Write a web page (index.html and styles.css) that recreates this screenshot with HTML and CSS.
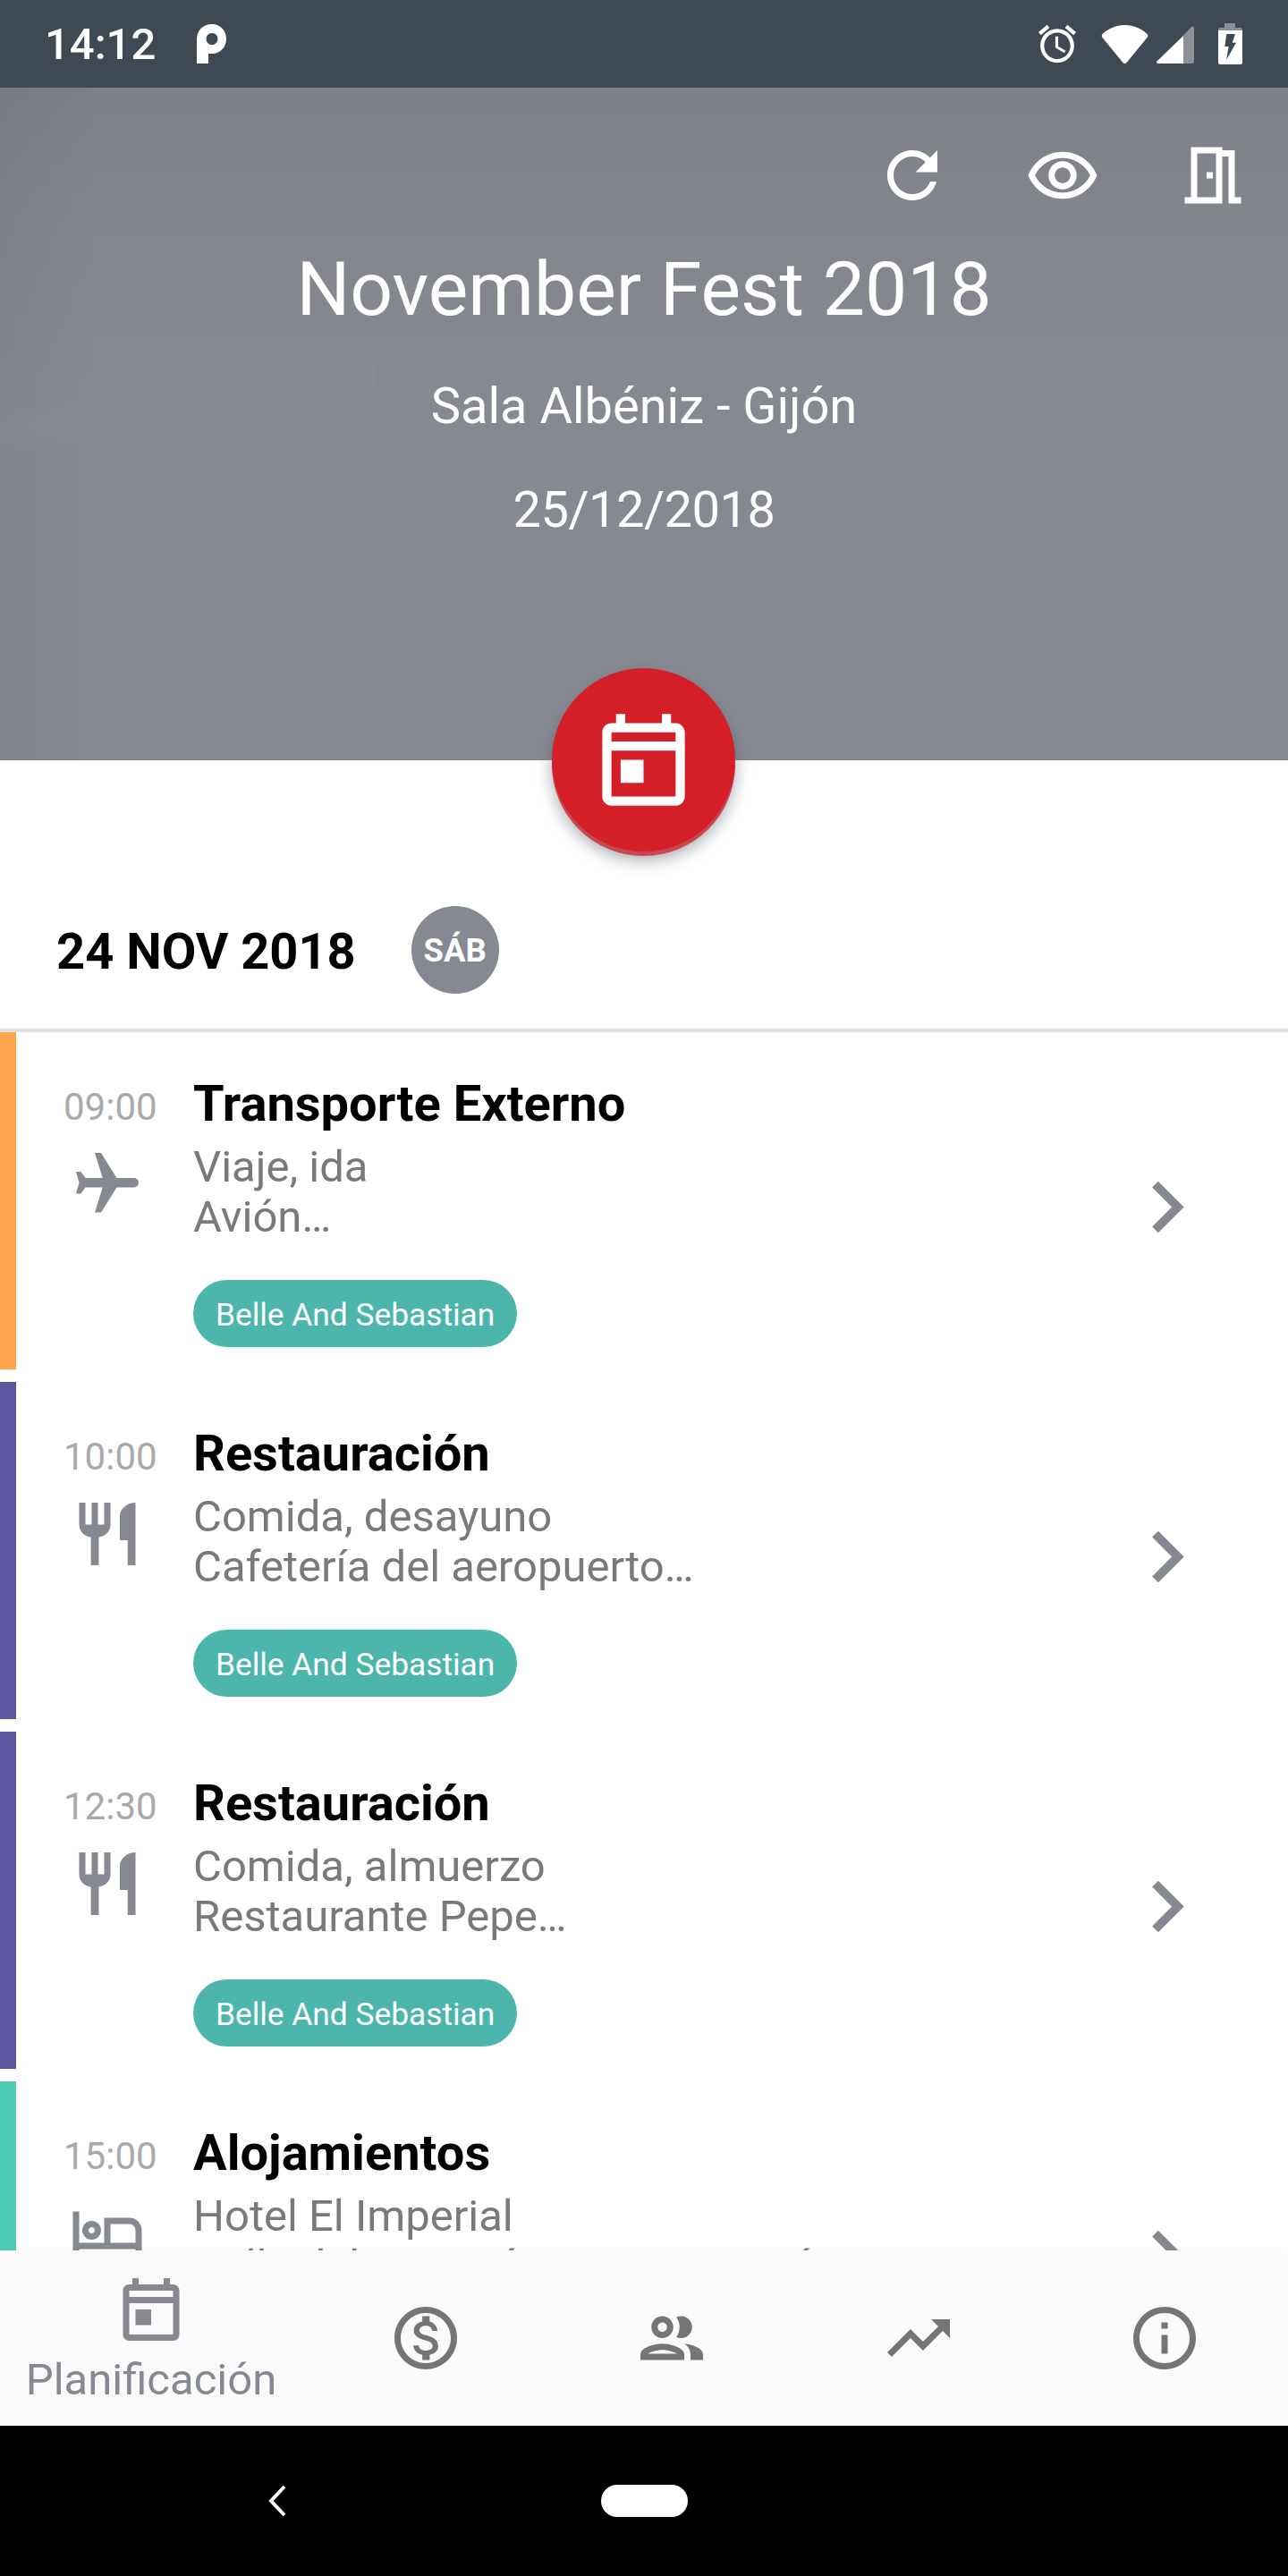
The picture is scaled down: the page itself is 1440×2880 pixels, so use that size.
FILE: index.html
```html
<!DOCTYPE html>
<html lang="es">
<head>
  <meta charset="UTF-8" />
  <title>November Fest 2018</title>
  <link rel="stylesheet" href="styles.css">
</head>
<body>
  <div class="statusbar">
    <div class="status-left">
      <span class="clock">14:12</span>
      <svg class="parking" viewBox="0 0 33 44"><path fill-rule="evenodd" d="M0 17C0 7 7 0 17 0c9 0 16 7 16 16.500S26 33 17 33h-4v11H0z M17 10a6.500 6.500 0 1 0 .01 0z"/></svg>
    </div>
    <div class="status-right">
      <svg class="alarm" viewBox="2 1.860 20 20.140"><path d="M22 5.720l-4.600-3.860-1.290 1.530 4.600 3.860L22 5.720zM7.880 3.390L6.600 1.860 2 5.710l1.290 1.530 4.590-3.850zM12.500 8H11v6l4.750 2.850.75-1.230-4-2.370V8zM12 4c-4.970 0-9 4.030-9 9s4.030 9 9 9 9-4.030 9-9-4.030-9-9-9zm0 16c-3.870 0-7-3.130-7-7s3.130-7 7-7 7 3.130 7 7-3.130 7-7 7z"/></svg>
      <svg class="wifi" viewBox="0 0 53 43"><path d="M1.500 10C8 4 17 0 26.500 0S45 4 51.500 10c1 1.500 1 2.500 0 4L29 41.500c-1.500 2-3.500 2-5 0L1.500 14c-1-1.500-1-2.500 0-4z"/></svg>
      <svg class="signal" viewBox="0 0 42 42"><path class="dim" d="M30 10.500L39 1c1-1 3-.5 3 1v38c0 1-1 2-2 2H30z"/><path d="M30 11v31H2c-2 0-2.500-1.500-1.500-2.500z"/></svg>
      <svg class="battery" viewBox="0 0 27 46"><path class="dim" d="M7 0h12v5h6c1 0 2 1 2 2v3H0V7c0-1 1-2 2-2h5z"/><path fill-rule="evenodd" d="M0 8h27v36c0 1-1 2-2 2H2c-1 0-2-1-2-2z M9.300 12H19l-3.300 9.700H20L9 41l2.700-15H7.300z"/></svg>
    </div>
  </div>

  <header class="event-header">
    <div class="header-actions">
      <button class="icon-btn"><svg viewBox="0 0 24 24"><path d="M17.650 6.350C16.200 4.900 14.210 4 12 4c-4.420 0-7.990 3.580-7.990 8s3.570 8 7.990 8c3.730 0 6.840-2.550 7.730-6h-2.080c-.82 2.330-3.040 4-5.650 4-3.310 0-6-2.690-6-6s2.690-6 6-6c1.660 0 3.140.69 4.220 1.780L13 11h7V4l-2.350 2.350z"/></svg></button>
      <button class="icon-btn"><svg viewBox="0 0 24 24"><path d="M12 6.500c3.790 0 7.170 2.130 8.820 5.500-1.650 3.370-5.020 5.500-8.820 5.500S4.830 15.370 3.180 12C4.830 8.630 8.210 6.500 12 6.500m0-2C7 4.500 2.730 7.610 1 12c1.730 4.390 6 7.500 11 7.500s9.270-3.110 11-7.500c-1.730-4.390-6-7.500-11-7.500zm0 5c1.380 0 2.500 1.120 2.500 2.500s-1.120 2.500-2.500 2.500-2.500-1.120-2.500-2.500 1.120-2.500 2.500-2.500m0-2c-2.480 0-4.500 2.020-4.500 4.500s2.020 4.500 4.500 4.500 4.500-2.020 4.500-4.500-2.020-4.500-4.500-4.500z"/></svg></button>
      <button class="icon-btn"><svg viewBox="0 0 24 24"><path fill-rule="evenodd" d="M3 19h2V3h10v1h4v15h2v2h-4V6h-2v15H3z M7 5v14h6V5z M10 11h2v2h-2z"/></svg></button>
    </div>
    <h1 class="event-name">November Fest 2018</h1>
    <p class="event-place">Sala Albéniz - Gijón</p>
    <p class="event-date">25/12/2018</p>
    <button class="fab">
      <svg viewBox="0 0 24 24"><path d="M19 4h-1V2h-2v2H8V2H6v2H5c-1.100 0-2 .9-2 2v14c0 1.100.9 2 2 2h14c1.100 0 2-.9 2-2V6c0-1.100-.9-2-2-2zm0 16H5V10h14v10zm0-12H5V6h14v2zM7 12h5v5H7z"/></svg>
    </button>
  </header>

  <main class="agenda">
    <div class="day-row">
      <span class="day-date">24 NOV 2018</span>
      <span class="day-badge">SÁB</span>
    </div>

    <article class="item item-orange">
      <div class="item-side">
        <span class="item-time">09:00</span>
        <svg class="item-icon" viewBox="0 0 24 24"><path transform="rotate(90 12 12)" d="M21 16v-2l-8-5V3.500c0-.83-.67-1.500-1.500-1.500S10 2.670 10 3.500V9l-8 5v2l8-2.500V19l-2 1.500V22l3.500-1 3.500 1v-1.500L13 19v-5.500l8 2.500z"/></svg>
      </div>
      <div class="item-body">
        <h2 class="item-title">Transporte Externo</h2>
        <p class="item-text">Viaje, ida<br>Avión…</p>
        <span class="pill">Belle And Sebastian</span>
      </div>
      <svg class="chevron" viewBox="0 0 24 24"><path d="M10 6L8.590 7.410 13.170 12l-4.580 4.590L10 18l6-6z"/></svg>
    </article>

    <article class="item item-purple">
      <div class="item-side">
        <span class="item-time">10:00</span>
        <svg class="item-icon" viewBox="0 0 24 24"><path d="M11 9H9V2H7v7H5V2H3v7c0 2.120 1.660 3.840 3.750 3.970V22h2.500v-9.030C11.340 12.840 13 11.120 13 9V2h-2v7zm5-3v8h2.500v8H21V2c-2.760 0-5 2.240-5 4z"/></svg>
      </div>
      <div class="item-body">
        <h2 class="item-title">Restauración</h2>
        <p class="item-text">Comida, desayuno<br>Cafetería del aeropuerto…</p>
        <span class="pill">Belle And Sebastian</span>
      </div>
      <svg class="chevron" viewBox="0 0 24 24"><path d="M10 6L8.590 7.410 13.170 12l-4.580 4.590L10 18l6-6z"/></svg>
    </article>

    <article class="item item-purple">
      <div class="item-side">
        <span class="item-time">12:30</span>
        <svg class="item-icon" viewBox="0 0 24 24"><path d="M11 9H9V2H7v7H5V2H3v7c0 2.120 1.660 3.840 3.750 3.970V22h2.500v-9.030C11.340 12.840 13 11.120 13 9V2h-2v7zm5-3v8h2.500v8H21V2c-2.760 0-5 2.240-5 4z"/></svg>
      </div>
      <div class="item-body">
        <h2 class="item-title">Restauración</h2>
        <p class="item-text">Comida, almuerzo<br>Restaurante Pepe…</p>
        <span class="pill">Belle And Sebastian</span>
      </div>
      <svg class="chevron" viewBox="0 0 24 24"><path d="M10 6L8.590 7.410 13.170 12l-4.580 4.590L10 18l6-6z"/></svg>
    </article>

    <article class="item item-teal">
      <div class="item-side">
        <span class="item-time">15:00</span>
        <svg class="item-icon" viewBox="0 0 24 24"><path d="M7 14c1.660 0 3-1.340 3-3S8.660 8 7 8s-3 1.340-3 3 1.340 3 3 3zm0-4c.55 0 1 .45 1 1s-.45 1-1 1-1-.45-1-1 .45-1 1-1zm12-3h-8v8H3V5H1v15h2v-3h18v3h2v-9c0-2.210-1.790-4-4-4zm2 8h-8V9h6c1.100 0 2 .9 2 2v4z"/></svg>
      </div>
      <div class="item-body">
        <h2 class="item-title">Alojamientos</h2>
        <p class="item-text">Hotel El Imperial<br>Calle del Marqués, 3, 33201 Gijón…</p>
      </div>
      <svg class="chevron" viewBox="0 0 24 24"><path d="M10 6L8.590 7.410 13.170 12l-4.580 4.590L10 18l6-6z"/></svg>
    </article>
  </main>

  <nav class="tabs">
    <a class="tab tab-active">
      <svg viewBox="0 0 24 24"><path d="M19 4h-1V2h-2v2H8V2H6v2H5c-1.100 0-2 .9-2 2v14c0 1.100.9 2 2 2h14c1.100 0 2-.9 2-2V6c0-1.100-.9-2-2-2zm0 16H5V10h14v10zm0-12H5V6h14v2zM7 12h5v5H7z"/></svg>
      <span>Planificación</span>
    </a>
    <a class="tab">
      <svg viewBox="0 0 24 24"><path d="M12 2C6.480 2 2 6.480 2 12s4.480 10 10 10 10-4.480 10-10S17.520 2 12 2zm0 18c-4.410 0-8-3.590-8-8s3.590-8 8-8 8 3.590 8 8-3.590 8-8 8zm.31-8.860c-1.770-.45-2.340-.94-2.340-1.670 0-.84.79-1.430 2.100-1.430 1.380 0 1.900.66 1.940 1.640h1.710c-.05-1.340-.87-2.570-2.490-2.970V5H10.900v1.690c-1.510.32-2.720 1.300-2.720 2.810 0 1.790 1.490 2.690 3.660 3.210 1.950.46 2.340 1.150 2.340 1.870 0 .53-.39 1.390-2.100 1.390-1.600 0-2.230-.72-2.320-1.640H8.040c.1 1.700 1.360 2.660 2.860 2.970V19h2.340v-1.670c1.520-.29 2.720-1.160 2.730-2.770-.01-2.200-1.900-2.960-3.660-3.420z"/></svg>
    </a>
    <a class="tab">
      <svg viewBox="0 0 24 24"><path d="M9 13.750c-2.340 0-7 1.170-7 3.500V19h14v-1.750c0-2.330-4.660-3.500-7-3.500zM4.340 17c.84-.58 2.870-1.250 4.660-1.250s3.820.67 4.660 1.250H4.340zM9 12c1.930 0 3.500-1.570 3.500-3.500S10.930 5 9 5 5.500 6.570 5.500 8.500 7.070 12 9 12zm0-5c.83 0 1.500.67 1.500 1.500S9.830 10 9 10s-1.500-.67-1.500-1.500S8.170 7 9 7zm7.040 6.810c1.160.84 1.960 1.960 1.960 3.440V19h4v-1.750c0-2.020-3.500-3.170-5.960-3.440zM15 12c1.930 0 3.500-1.570 3.500-3.500S16.930 5 15 5c-.54 0-1.040.13-1.500.35.63.89 1 1.980 1 3.150s-.37 2.260-1 3.150c.46.22.96.35 1.500.35z"/></svg>
    </a>
    <a class="tab">
      <svg viewBox="0 0 24 24"><path d="M16 6l2.290 2.290-4.880 4.880-4-4L2 16.590 3.410 18l6-6 4 4 6.300-6.290L22 12V6z"/></svg>
    </a>
    <a class="tab">
      <svg viewBox="0 0 24 24"><path d="M11 7h2v2h-2zm0 4h2v6h-2zm1-9C6.480 2 2 6.480 2 12s4.480 10 10 10 10-4.480 10-10S17.520 2 12 2zm0 18c-4.410 0-8-3.590-8-8s3.590-8 8-8 8 3.590 8 8-3.590 8-8 8z"/></svg>
    </a>
  </nav>

  <div class="systembar">
    <svg class="sys-back" viewBox="0 0 22 36"><path d="M19 2L4 18l15 16"/></svg>
    <span class="sys-home"></span>
  </div>
</body>
</html>
```

FILE: styles.css
```css
* { box-sizing: border-box; }
html, body { height: 100%; }
body {
  font-family: Roboto, sans-serif;
  margin: 0;
  width: 1440px;
  height: 2880px;
  display: flex;
  flex-direction: column;
  overflow: hidden;
  background: white;
}
p, h1, h2 { margin: 0; }
svg { display: block; fill: currentColor; }

/* status bar */
.statusbar {
  height: 98px;
  flex: none;
  background: #3f4953;
  color: white;
  display: flex;
  justify-content: space-between;
  align-items: center;
  padding: 0 51px 0 50px;
}
.status-left { display: flex; align-items: center; gap: 46px; }
.clock { font-size: 49px; font-weight: 500; }
.parking { width: 33px; height: 44px; }
.status-right { display: flex; align-items: center; }
.status-right .dim { opacity: 0.4; }
.alarm { width: 42px; height: 44px; }
.wifi { width: 53px; height: 43px; margin-left: 28px; }
.signal { width: 42px; height: 42px; margin-left: 9px; margin-top: 2px; }
.battery { width: 27px; height: 46px; margin-left: 27px; }

/* event header: blurred photo look */
.event-header {
  height: 752px;
  flex: none;
  position: relative;
  color: white;
  text-align: center;
  background:
    linear-gradient(172deg, rgba(255,255,255,0) 44%, rgba(255,255,255,0.025) 47%, rgba(255,255,255,0) 51%) 0 0 / 420px 100% no-repeat,
    linear-gradient(90deg, rgba(0,0,0,0.04) 0%, rgba(0,0,0,0) 8%),
    linear-gradient(180deg, #7e8088 0%, #83858d 18%, #878992 45%, #878992 100%);
}
.header-actions { display: flex; justify-content: flex-end; padding-top: 56px; }
.icon-btn {
  width: 168px;
  height: 84px;
  padding: 0;
  border: none;
  background: none;
  color: white;
  display: flex;
  justify-content: center;
}
.icon-btn svg { width: 84px; height: 84px; }
.event-name { font-size: 84px; font-weight: 400; line-height: 100px; margin-top: 36px; }
.event-place { font-size: 56px; line-height: 66px; margin-top: 47px; }
.event-date { font-size: 56px; line-height: 66px; margin-top: 50px; letter-spacing: -0.5px; }
.fab {
  position: absolute;
  left: 617px;
  top: 649px;
  width: 205px;
  height: 205px;
  padding: 0;
  border: none;
  border-radius: 50%;
  background: #d51f28;
  color: white;
  display: flex;
  align-items: center;
  justify-content: center;
  box-shadow: 0 5px 0 #c9474e, 0 10px 18px rgba(60,70,80,0.45);
}
.fab svg { width: 123px; height: 123px; }

/* agenda list */
.agenda { flex: 1; min-height: 0; overflow: hidden; }
.day-row {
  height: 304px;
  padding-top: 163px;
  padding-left: 63px;
  display: flex;
  align-items: flex-start;
  border-bottom: 4px solid #e0e0e0;
}
.day-date { font-size: 56px; font-weight: 700; line-height: 102px; color: #000; }
.day-badge {
  width: 98px;
  height: 98px;
  margin-left: 62px;
  border-radius: 50%;
  background: #868892;
  color: white;
  font-size: 36.500px;
  font-weight: 700;
  display: flex;
  align-items: center;
  justify-content: center;
}
.item {
  height: 377px;
  margin-bottom: 14px;
  border-left: 18px solid;
  padding: 47px 0 0 53px;
  display: flex;
  position: relative;
}
.item-orange { border-color: #ffa64d; }
.item-purple { border-color: #5b569d; }
.item-teal { border-color: #4fcdb7; }
.item-side { width: 145px; flex: none; }
.item-time { display: block; font-size: 42px; line-height: 74px; color: #a8a9ad; }
.item-icon { width: 84px; height: 84px; margin: 6.500px 0 0 7px; color: #868892; }
.item-title { font-size: 56px; font-weight: 700; line-height: 66px; color: #000; }
.item-text { font-size: 49px; line-height: 56px; color: #78797d; margin-top: 10px; margin-bottom: 42px; }
.pill {
  display: inline-block;
  height: 75px;
  line-height: 78px;
  padding: 0 25px;
  border-radius: 38px;
  background: #4db6ac;
  color: white;
  font-size: 35.300px;
}
.chevron {
  position: absolute;
  right: 78.500px;
  top: 137.500px;
  width: 115px;
  height: 115px;
  color: #868892;
}

/* bottom tabs */
.tabs {
  height: 196px;
  flex: none;
  background: #fafafa;
  display: flex;
  color: #757575;
  position: relative;
  box-shadow: 0 -2px 5px rgba(0,0,0,0.04);
}
.tab {
  width: 275.500px;
  display: flex;
  flex-direction: column;
  align-items: center;
  padding-top: 56px;
}
.tab svg { width: 84px; height: 84px; }
.tab-active { width: 338px; padding-top: 24px; color: #868892; }
.tab-active span { font-size: 49px; line-height: 58px; margin-top: 8px; }

/* android nav */
.systembar {
  height: 168px;
  flex: none;
  background: #000;
  position: relative;
  display: flex;
  align-items: center;
  justify-content: center;
}
.sys-back {
  position: absolute;
  left: 299px;
  top: 66px;
  width: 22px;
  height: 36px;
  fill: none;
  stroke: white;
  stroke-width: 4;
}
.sys-home { width: 97px; height: 36px; border-radius: 18px; background: white; }
```
